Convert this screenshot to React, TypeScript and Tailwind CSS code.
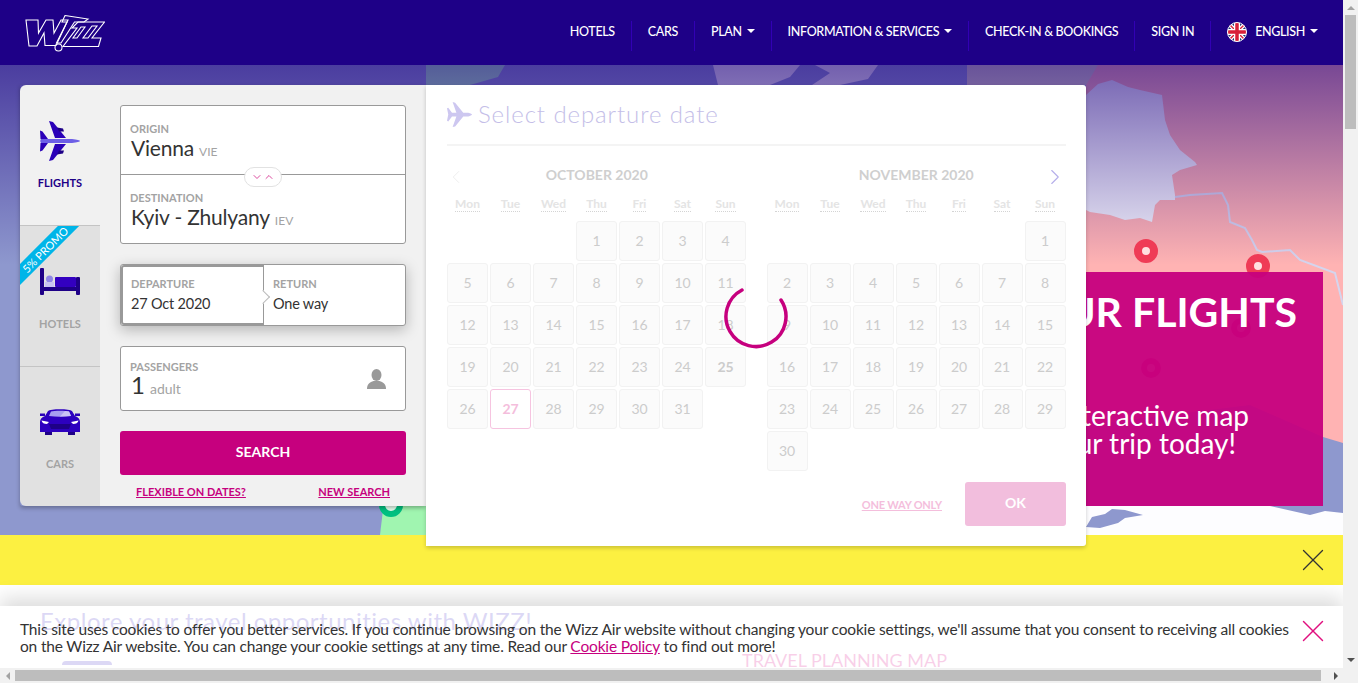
import { ChevronDown, ChevronLeft, ChevronRight, X } from "lucide-react";

const WEEK_DAYS = ["Mon", "Tue", "Wed", "Thu", "Fri", "Sat", "Sun"];

const NAV_ITEMS = [
  { label: "HOTELS" },
  { label: "CARS" },
  { label: "PLAN", caret: true },
  { label: "INFORMATION & SERVICES", caret: true },
  { label: "CHECK-IN & BOOKINGS" },
  { label: "SIGN IN" },
];

function Caret() {
  return <span className="ml-[5px] mb-[3px] h-0 w-0 border-x-[4px] border-t-[4px] border-x-transparent border-t-white" />;
}

function WizzLogo() {
  return (
    <svg width="80" height="38" viewBox="25 14 80 38" fill="none" stroke="#fff" strokeWidth="1.1">
      <path d="M26 20H38L38.5 33L46 20H53L54 33L61 20H68L56 45.5H45L44 33L37 46H29Z" />
      <path d="M65 15.5L88 19L84 22H74.5L61 43H56.5L67 22H62Z" />
      <circle cx="58.5" cy="47.5" r="3.5" />
      <path d="M78 22H104.5L92 38H101L98.5 46.5H63L77 28H72ZM85 27H81L73 38H77ZM97 26H92L83 38H88Z" />
    </svg>
  );
}

function PlaneIcon() {
  return (
    <svg width="40" height="40" viewBox="0 0 40 40">
      <path d="M9 0L13 1L26 17H15ZM9 40L13 39L26 23H15ZM0 9.500L2.500 10.500L8 18H0.500ZM0 30.500L2.500 29.500L8 22H0.500Z" fill="#2a00b8" />
      <path d="M17 6.500L23 7.500L24 10.500L19 10.500ZM17 33.500L23 32.500L24 29.500L19 29.500Z" fill="#1e0087" />
      <path d="M1 18H32C37 18.500 40 19.300 40 20C40 20.700 37 21.500 32 22H1C0 21 0 19 1 18Z" fill="#6d5fe6" />
    </svg>
  );
}

function BedIcon() {
  return (
    <svg width="40" height="27" viewBox="0 0 40 27">
      <rect x="0" y="0" width="4" height="27" rx="1" fill="#1e0087" />
      <rect x="36" y="9" width="4" height="18" rx="1" fill="#1e0087" />
      <rect x="3" y="19" width="34" height="4" fill="#1e0087" />
      <rect x="15" y="9" width="21" height="10" rx="1" fill="#3300c0" />
      <circle cx="9.500" cy="11" r="3.500" fill="#8f86e6" />
      <rect x="5" y="14" width="9" height="5" fill="#c9c4f2" />
    </svg>
  );
}

function CarIcon() {
  return (
    <svg width="40" height="27" viewBox="0 0 40 27">
      <path d="M5 24H12V27H5ZM28 24H35V27H28Z" fill="#1e0087" />
      <path d="M0 5.500H5V8H0ZM35 5.500H40V8H35Z" fill="#2a00b8" />
      <path d="M8 3C10 0.500 30 0.500 32 3L35 8C38 9 40 11 40 14V24H0V14C0 11 2 9 5 8Z" fill="#2d00bf" />
      <path d="M9 8L11 3.500C14 2.500 26 2.500 29 3.500L31 8C24 9 16 9 9 8Z" fill="#a79ff0" />
      <path d="M20 8.500L25 3L29 3.500L31 8Z" fill="#c9c4f5" />
      <path d="M1.500 12.500L9 14L7 16C4 16 2 15 1.500 12.500ZM38.500 12.500L31 14L33 16C36 16 38 15 38.500 12.500Z" fill="#fff" />
      <path d="M9 16H31L29 21H11Z" fill="#1e0087" />
    </svg>
  );
}

function PersonIcon() {
  return (
    <svg width="19" height="20" viewBox="0 0 19 20" fill="#999">
      <ellipse cx="9.500" cy="6" rx="5" ry="6" />
      <path d="M0 20C0 15 3 13 6.500 12H12.500C16 13 19 15 19 20Z" />
    </svg>
  );
}

function UkFlag() {
  return (
    <svg width="20" height="20" viewBox="0 0 20 20">
      <defs>
        <clipPath id="flag">
          <circle cx="10" cy="10" r="9.500" />
        </clipPath>
      </defs>
      <g clipPath="url(#flag)">
        <rect width="20" height="20" fill="#1f3a7a" />
        <path d="M0 0L20 20M20 0L0 20" stroke="#fff" strokeWidth="4" />
        <path d="M0 0L20 20M20 0L0 20" stroke="#d8203a" strokeWidth="1.400" />
        <path d="M10 0V20M0 10H20" stroke="#fff" strokeWidth="6" />
        <path d="M10 0V20M0 10H20" stroke="#d8203a" strokeWidth="3.500" />
      </g>
      <circle cx="10" cy="10" r="9.500" fill="none" stroke="#fff" />
    </svg>
  );
}

function HeroMap() {
  return (
    <svg className="absolute inset-0" width="1343" height="470" viewBox="0 0 1343 470">
      <defs>
        <linearGradient id="shade" x1="0" y1="0" x2="0" y2="1">
          <stop offset="0" stopColor="#1e0080" stopOpacity="0.6" />
          <stop offset="1" stopColor="#1e0080" stopOpacity="0" />
        </linearGradient>
      </defs>
      <rect width="1343" height="470" fill="#8e98ce" />
      <path d="M426 0H505L498 12L470 20H426Z" fill="#a6e8bd" />
      <path d="M380 470L386 420L426 420V470Z" fill="#a0f5b0" />
      <path d="M713 0H800L790 12L770 20H718ZM815 0H878L868 14L840 20H812L830 8Z" fill="#f1eef2" />
      <path d="M967 0H1110V20H967Z" fill="#d8cfc0" />
      <path d="M1098 0H1343V378L1323 372L1250 340L1086 360L1086 20Z" fill="#ffb3b3" />
      <path d="M1086 30L1098 19L1112 15L1128 22L1140 25L1162 30L1165 55L1170 70L1180 85L1195 97L1197 100L1180 105L1172 110L1175 130L1175 135L1160 135L1155 140L1152 157L1140 153L1125 155L1110 150L1090 147L1086 145Z" fill="#f2f2fa" />
      <path d="M1175 132L1190 130L1222 128L1228 140L1230 157L1245 163L1252 175L1257 185L1262 187L1290 185L1300 195L1335 208L1343 240" fill="none" stroke="#d5d5ee" strokeWidth="2" />
      <path d="M1040 441H1343V470H1040Z" fill="#fdfdff" />
      <path d="M1086 462L1092 452L1105 449L1112 444L1125 445L1143 450L1125 453L1118 458L1100 463ZM1270 441H1343V448L1325 446L1310 450Z" fill="#8e98ce" />
      <rect width="1343" height="200" fill="url(#shade)" />
      <circle cx="1146" cy="186" r="8" fill="#ffe0e0" stroke="#ef3b56" strokeWidth="8" />
      <circle cx="1258" cy="201" r="8" fill="#ffe0e0" stroke="#ef3b56" strokeWidth="8" />
      <circle cx="1151" cy="303" r="7" fill="none" stroke="#e0206a" strokeWidth="6" />
      <circle cx="1241" cy="263" r="7" fill="none" stroke="#e0206a" strokeWidth="6" />
      <circle cx="391" cy="440" r="9" fill="#e8fff0" stroke="#00c080" strokeWidth="6" />
    </svg>
  );
}

function TabLabel({ children, active }: { children: string; active?: boolean }) {
  return <span className={`text-[11px] font-bold ${active ? "text-[#1e0087]" : "text-[#a3a3a3]"}`}>{children}</span>;
}

function SideTabs() {
  return (
    <div className="flex w-[80px] flex-col overflow-hidden rounded-l-md">
      <div className="flex h-[140px] flex-col items-center bg-[#f1f1f1] pt-[36px]">
        <PlaneIcon />
        <span className="mt-[8px]">
          <TabLabel active>FLIGHTS</TabLabel>
        </span>
      </div>
      <div className="relative flex h-[141px] flex-col items-center overflow-hidden border-t border-[#c4c4c4] bg-[#e1e1e1] pt-[42px]">
        <div className="absolute left-[-25px] top-[16px] flex h-[15px] w-[100px] -rotate-45 items-center justify-center bg-[#00b5e8] text-[11px] leading-none text-white">
          5% PROMO
        </div>
        <BedIcon />
        <span className="mt-[15px]">
          <TabLabel>HOTELS</TabLabel>
        </span>
      </div>
      <div className="flex h-[140px] flex-col items-center border-t border-[#c4c4c4] bg-[#e1e1e1] pt-[41px]">
        <CarIcon />
        <span className="mt-[15px]">
          <TabLabel>CARS</TabLabel>
        </span>
      </div>
    </div>
  );
}

function FieldLabel({ children }: { children: string }) {
  return <div className="text-[11px] font-bold leading-[14px] text-[#a3a3a3]">{children}</div>;
}

function SearchForm() {
  return (
    <div className="flex w-[326px] flex-col bg-[#f1f1f1] pl-[20px] pr-[20px] pt-[20px]">
      <div className="relative h-[139px] rounded-[3px] border border-[#999] bg-white">
        <div className="h-[69px] border-b border-[#999] pl-[9px] pt-[16px]">
          <FieldLabel>ORIGIN</FieldLabel>
          <div className="flex items-baseline gap-[5px] pl-[1px] text-[21px] leading-[24px] tracking-[-0.2px] text-[#333]">
            Vienna <span className="text-xs tracking-normal text-[#a3a3a3]">VIE</span>
          </div>
        </div>
        <div className="pl-[9px] pt-[16px]">
          <FieldLabel>DESTINATION</FieldLabel>
          <div className="flex items-baseline gap-[5px] pl-[1px] text-[21px] leading-[24px] tracking-[-0.2px] text-[#333]">
            Kyiv - Zhulyany <span className="text-xs tracking-normal text-[#a3a3a3]">IEV</span>
          </div>
        </div>
        <div className="absolute left-[123px] top-[61px] flex h-[20px] w-[38px] items-center justify-center rounded-full border border-[#e2e2e2] bg-white text-[#d0107f]">
          <ChevronDown size={12} strokeWidth={1.500} />
          <ChevronDown size={12} strokeWidth={1.500} className="rotate-180" />
        </div>
      </div>

      <div className="relative mt-[20px] flex h-[62px] rounded-[3px] border border-[#999] bg-white shadow-[0_4px_14px_rgba(0,0,0,0.25)]">
        <div className="w-[143px] rounded-l-[3px] border-2 border-r border-[#999] pl-[8px] pt-[10px]">
          <FieldLabel>DEPARTURE</FieldLabel>
          <div className="mt-[3px] text-[14.500px] leading-[20px] tracking-[-0.2px] text-[#333]">27 Oct 2020</div>
        </div>
        <div className="pl-[9px] pt-[12px]">
          <FieldLabel>RETURN</FieldLabel>
          <div className="mt-[3px] text-[14.500px] leading-[20px] tracking-[-0.2px] text-[#333]">One way</div>
        </div>
        <div className="absolute left-[137px] top-[27px] h-[10px] w-[10px] rotate-45 border-r border-t border-[#bbb] bg-white" />
      </div>

      <div className="mt-[20px] flex h-[65px] items-center justify-between rounded-[3px] border border-[#999] bg-white pl-[9px] pr-[19px]">
        <div className="pt-[2px]">
          <FieldLabel>PASSENGERS</FieldLabel>
          <div className="flex items-baseline gap-[5px] pl-[1px] text-[24px] leading-[22px] text-[#333]">
            1 <span className="text-sm text-[#a3a3a3]">adult</span>
          </div>
        </div>
        <PersonIcon />
      </div>

      <button className="mt-[20px] h-[44px] rounded-[3px] bg-[#c6007e] pb-[3px] text-sm font-bold text-white">SEARCH</button>

      <div className="mt-[9px] flex justify-between px-[16px] text-[11px] font-bold text-[#c6007e]">
        <a className="underline">FLEXIBLE ON DATES?</a>
        <a className="underline">NEW SEARCH</a>
      </div>
    </div>
  );
}

function Month({ title, offset, days, weekendBold, today }: { title: string; offset: number; days: number; weekendBold?: number; today?: number }) {
  const cells: (number | null)[] = [...Array(offset).fill(null), ...Array.from({ length: days }, (_, i) => i + 1)];
  return (
    <div className="w-[300px]">
      <div className="h-[22px] text-center text-sm font-bold leading-[22px] text-[#cfcfcf]">{title}</div>
      <div className="mt-[10px] grid grid-cols-[repeat(7,41px)] gap-x-[2px]">
        {WEEK_DAYS.map((d) => (
          <div key={d} className="text-center text-xs font-bold leading-[16px] text-[#e4e4e4]">
            <span className="border-b border-dotted border-[#d4d4d4]">{d}</span>
          </div>
        ))}
      </div>
      <div className="mt-[9px] grid grid-cols-[repeat(7,41px)] gap-x-[2px] gap-y-[2px]">
        {cells.map((day, i) =>
          day === null ? (
            <div key={i} className="h-[40px]" />
          ) : (
            <div
              key={i}
              className={`flex h-[40px] items-center justify-center rounded-[3px] border text-sm ${
                day === today ? "border-[#f6c4e0] bg-white font-bold text-[#f4bedc]" : "border-[#f2f2f2] bg-[#fbfbfb] text-[#cccccc]"
              } ${day === weekendBold ? "font-bold" : ""}`}
            >
              {day}
            </div>
          ),
        )}
      </div>
    </div>
  );
}

function CalendarPanel() {
  return (
    <div className="absolute left-[426px] top-[20px] z-10 flex h-[461px] w-[660px] flex-col rounded-r-[3px] bg-white pl-[21px] pr-[20px] shadow-[0_2px_4px_rgba(0,0,0,0.2)]">
      <div className="flex h-[61px] items-center gap-[6px] border-b-2 border-[#f4f4f4] pb-[1px]">
        <svg width="25" height="25" viewBox="0 0 40 40" fill="#cdc7f0">
          <path d="M9 0L13 1L26 17H34C38 18 40 19.300 40 20C40 20.700 38 22 34 23H26L13 39L9 40L15 23H8L2 31L0 30L2 20L0 10L2 9L8 17H15Z" />
        </svg>
        <span className="text-[24px] font-light leading-none tracking-[0.9px] text-[#c4bee8]">Select departure date</span>
      </div>
      <div className="relative mt-[18px] flex gap-[20px]">
        <Month title="OCTOBER  2020" offset={3} days={31} weekendBold={25} today={27} />
        <Month title="NOVEMBER  2020" offset={6} days={30} />
        <ChevronLeft size={22} strokeWidth={1} className="absolute left-[-2px] top-[2px] text-[#ececec]" />
        <ChevronRight size={26} strokeWidth={1} className="absolute right-[-2px] top-[0px] text-[#b5aeea]" />
      </div>
      <svg className="absolute left-[298px] top-[200px]" width="64" height="64" viewBox="0 0 64 64" fill="none">
        <path d="M57 15A30 30 0 1 1 18 5" stroke="#c6007e" strokeWidth="3.500" strokeLinecap="round" />
      </svg>
      <div className="absolute bottom-[20px] right-[20px] flex items-center">
        <a className="mr-[23px] mt-[2px] text-[11px] font-bold tracking-[-0.2px] text-[#f4bedc] underline">ONE WAY ONLY</a>
        <button className="h-[44px] w-[101px] rounded-[3px] bg-[#f2bedd] pb-[3px] text-sm font-bold text-white">OK</button>
      </div>
    </div>
  );
}

function PromoBanner() {
  return (
    <div className="absolute right-[20px] top-[207px] flex h-[234px] w-[500px] flex-col items-end bg-[#c6007e]/95 pr-[26px] pt-[19px] text-white">
      <div className="whitespace-nowrap text-[41px] font-bold leading-[42px]">YOUR FLIGHTS</div>
      <div className="mr-[48px] mt-[68px] whitespace-nowrap text-[28px] leading-[28px]">Use our interactive map</div>
      <div className="mr-[61px] whitespace-nowrap text-[28px] leading-[28px]">and plan your trip today!</div>
    </div>
  );
}

export default function App() {
  return (
    <div className="flex h-screen w-full overflow-hidden bg-white font-['Lato',sans-serif]">
      <div className="flex min-w-0 flex-1 flex-col">
        <div className="relative min-h-0 flex-1 overflow-hidden">
          <header className="flex h-[65px] items-center justify-between bg-[#1e0087] pl-[25px] pr-[25px]">
            <WizzLogo />
            <nav className="mt-[6px] flex h-[30px] items-center text-[12.500px] font-medium tracking-[-0.35px] text-white">
              {NAV_ITEMS.map((item) => (
                <div key={item.label} className="flex h-full items-center border-r border-[#3200b4] px-[16px] pb-[7px]">
                  {item.label}
                  {item.caret && <Caret />}
                </div>
              ))}
              <div className="flex h-full items-center pb-[7px] pl-[16px]">
                <UkFlag />
                <span className="ml-[8px]">ENGLISH</span>
                <Caret />
              </div>
            </nav>
          </header>

          <section className="relative h-[470px]">
            <HeroMap />
            <PromoBanner />
            <div className="relative flex h-[441px] pl-[20px] pt-[20px]">
              <div className="flex h-[421px] rounded-b-[3px] shadow-[0_2px_4px_rgba(0,0,0,0.3)]">
                <SideTabs />
                <SearchForm />
              </div>
            </div>
            <CalendarPanel />
          </section>

          <div className="flex h-[50px] items-center justify-end bg-[#fcf041] pr-[11px]">
            <X size={38} strokeWidth={0.800} className="text-[#333]" />
          </div>

          <section className="px-[40px] pt-[21px]">
            <h2 className="whitespace-nowrap text-[24px] leading-[30px] tracking-[0.5px] text-[#503ccd]">Explore your travel opportunities with WIZZ!</h2>
            <div className="mt-[13px] flex">
              <div className="ml-[22px] mt-[12px] h-[4px] w-[50px] rounded-t bg-[#503ccd]" />
              <div className="ml-[630px] text-lg font-normal leading-[22px] text-[#dc0f8c]">TRAVEL PLANNING MAP</div>
            </div>
          </section>

          <div className="absolute bottom-0 left-0 right-0 z-20 flex h-[62px] items-start justify-between bg-white/80 pl-[20px] pr-[11px] pt-[15px] shadow-[0_-8px_20px_rgba(0,0,0,0.14)]">
            <p className="whitespace-nowrap text-[15.500px] leading-[17px] tracking-[-0.17px] text-[#333]">
              This site uses cookies to offer you better services. If you continue browsing on the Wizz Air website without changing your cookie settings, we'll assume that you consent to receiving all cookies
              <br />
              on the Wizz Air website. You can change your cookie settings at any time. Read our <a className="text-[#c6007e] underline">Cookie Policy</a> to find out more!
            </p>
            <X size={38} strokeWidth={0.900} className="mt-[-9px] text-[#e0107f]" />
          </div>
        </div>

        <div className="flex h-[15px] items-center bg-[#f1f1f1]">
          <div className="flex w-[15px] justify-center">
            <div className="h-0 w-0 border-y-[4px] border-r-[4px] border-y-transparent border-r-[#a3a3a3]" />
          </div>
          <div className="h-[11px] w-[1306px] bg-[#bdbdbd]" />
          <div className="flex flex-1 justify-end pr-[5px]">
            <div className="h-0 w-0 border-y-[4px] border-l-[4px] border-y-transparent border-l-[#505050]" />
          </div>
        </div>
      </div>

      <div className="flex w-[15px] flex-col items-center bg-[#f1f1f1]">
        <div className="mt-[6px] h-0 w-0 border-x-[4px] border-b-[4px] border-x-transparent border-b-[#a3a3a3]" />
        <div className="mt-[5px] h-[114px] w-[11px] bg-[#bdbdbd]" />
        <div className="mb-[21px] mt-auto h-0 w-0 border-x-[4px] border-t-[4px] border-x-transparent border-t-[#505050]" />
      </div>
    </div>
  );
}
